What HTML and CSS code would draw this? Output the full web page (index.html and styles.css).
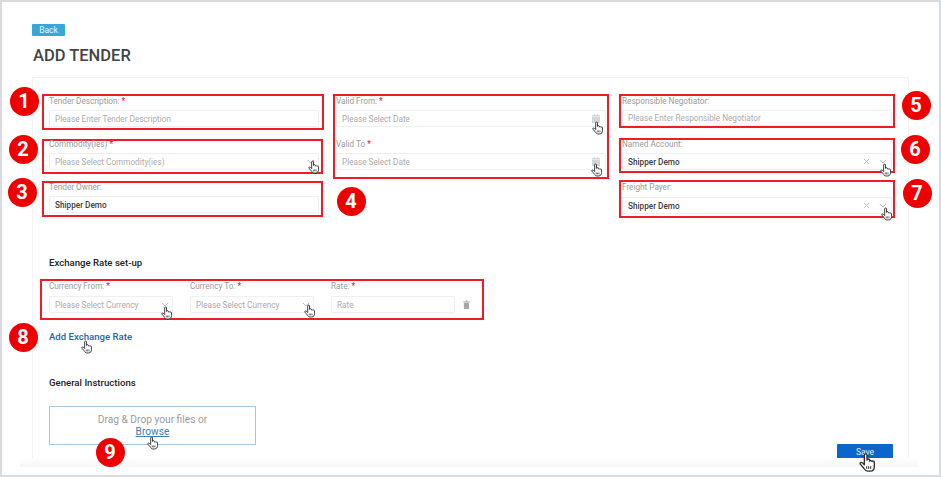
FILE: index.html
```html
<!DOCTYPE html>
<html lang="en">
<head>
    <meta charset="UTF-8">
    <title>Add Tender</title>
    <link rel="stylesheet" href="styles.css">
</head>
<body>
    <svg class="sprites" width="0" height="0">
        <symbol id="hand" viewBox="0 0 24 29">
            <path d="M8 3.500a2 2 0 0 1 4 0V11a2 2 0 0 1 4 .5v1a2 2 0 0 1 3.500.5 2 2 0 0 1 3.500 1V20c0 4-2 7.500-6 7.500h-4c-3 0-4-1.500-5.500-4L2 17c-1-2 1-3.500 3-2l3 3z" fill="#fff" stroke="#2e2e2e" stroke-width="2" stroke-linejoin="round"/>
            <path d="M11.500 20v4M14.500 20v4M17.500 20v4" stroke="#2e2e2e" stroke-width="1.600"/>
        </symbol>
        <symbol id="chevron" viewBox="0 0 10 6">
            <path d="M1 1l4 4 4-4" fill="none" stroke="#a8a8a8" stroke-width="1"/>
        </symbol>
        <symbol id="cross" viewBox="0 0 8 8">
            <path d="M1 1l6 6M7 1l-6 6" fill="none" stroke="#b5b5b5" stroke-width="1"/>
        </symbol>
        <symbol id="calendar" viewBox="0 0 8 9">
            <path d="M0 3h8v6H0zM0 1h8v1.500H0zM2 0h1v1H2zM5 0h1v1H5z" fill="#d6d6d6"/>
        </symbol>
        <symbol id="trash" viewBox="0 0 8 10">
            <path d="M0 1.500h8v1H0zM3 .5h2v1H3zM1 3h6v7H1z" fill="#a8a8a8"/>
        </symbol>
    </svg>

    <div class="frame">
        <a class="back" href="#">Back</a>
        <h1>ADD TENDER</h1>

        <div class="card">
            <div class="top-grid">
                <div class="col">
                    <div class="mark mark-desc">
                        <div class="lbl">Tender Description: <b>*</b></div>
                        <div class="control">Please Enter Tender Description</div>
                    </div>
                    <div class="mark mark-commodity">
                        <div class="lbl">Commodity(ies) <b>*</b></div>
                        <div class="control">Please Select Commodity(ies)<svg class="ico-chevron"><use href="#chevron"/></svg></div>
                    </div>
                    <div class="mark mark-owner">
                        <div class="lbl">Tender Owner:</div>
                        <div class="control filled">Shipper Demo</div>
                    </div>
                </div>

                <div class="col">
                    <div class="mark mark-dates">
                        <div class="lbl">Valid From: <b>*</b></div>
                        <div class="control">Please Select Date<svg class="ico-calendar"><use href="#calendar"/></svg></div>
                        <div class="lbl lbl-second">Valid To <b>*</b></div>
                        <div class="control">Please Select Date<svg class="ico-calendar"><use href="#calendar"/></svg></div>
                    </div>
                </div>

                <div class="col">
                    <div class="mark mark-negotiator">
                        <div class="lbl">Responsible Negotiator:</div>
                        <div class="control">Please Enter Responsible Negotiator</div>
                    </div>
                    <div class="mark mark-named">
                        <div class="lbl">Named Account:</div>
                        <div class="control filled">Shipper Demo<svg class="ico-cross"><use href="#cross"/></svg><svg class="ico-chevron"><use href="#chevron"/></svg></div>
                    </div>
                    <div class="mark mark-payer">
                        <div class="lbl">Freight Payer:</div>
                        <div class="control filled">Shipper Demo<svg class="ico-cross"><use href="#cross"/></svg><svg class="ico-chevron"><use href="#chevron"/></svg></div>
                    </div>
                </div>
            </div>

            <h2 class="rate-title">Exchange Rate set-up</h2>
            <div class="mark mark-rate">
                <div class="rate-field">
                    <div class="lbl">Currency From: <b>*</b></div>
                    <div class="control">Please Select Currency<svg class="ico-chevron"><use href="#chevron"/></svg></div>
                </div>
                <div class="rate-field">
                    <div class="lbl">Currency To: <b>*</b></div>
                    <div class="control">Please Select Currency<svg class="ico-chevron"><use href="#chevron"/></svg></div>
                </div>
                <div class="rate-field">
                    <div class="lbl">Rate: <b>*</b></div>
                    <div class="control">Rate</div>
                </div>
                <svg class="ico-trash"><use href="#trash"/></svg>
            </div>
            <a class="add-rate" href="#">Add Exchange Rate</a>

            <h2 class="instr-title">General Instructions</h2>
            <div class="bottom-row">
                <div class="dropzone">
                    <div>Drag &amp; Drop your files or</div>
                    <a href="#">Browse</a>
                </div>
                <button class="save">Save</button>
            </div>
        </div>

        <div class="fade"></div>

        <span class="badge b1">1</span>
        <span class="badge b2">2</span>
        <span class="badge b3">3</span>
        <span class="badge b4">4</span>
        <span class="badge b5">5</span>
        <span class="badge b6">6</span>
        <span class="badge b7">7</span>
        <span class="badge b8">8</span>
        <span class="badge b9">9</span>

        <svg class="hand h1"><use href="#hand"/></svg>
        <svg class="hand h2"><use href="#hand"/></svg>
        <svg class="hand h3"><use href="#hand"/></svg>
        <svg class="hand h4"><use href="#hand"/></svg>
        <svg class="hand h5"><use href="#hand"/></svg>
        <svg class="hand h6"><use href="#hand"/></svg>
        <svg class="hand h7"><use href="#hand"/></svg>
        <svg class="hand h8"><use href="#hand"/></svg>
        <svg class="hand h9"><use href="#hand"/></svg>
        <svg class="hand h10"><use href="#hand"/></svg>
    </div>
</body>
</html>
```

FILE: styles.css
```css
* {
    box-sizing: border-box;
    margin: 0;
    padding: 0;
    font-family: Roboto, Arial, sans-serif;
}

body {
    background: #fff;
    width: 941px;
    height: 477px;
    overflow: hidden;
}

.sprites {
    position: absolute;
}

.frame {
    position: relative;
    width: 941px;
    height: 477px;
    border: 2px solid #d8dbe0;
    padding: 22px 0 0 30px;
}

.back {
    display: block;
    width: 33px;
    height: 12px;
    background: #3aa6d8;
    border-radius: 1px;
    color: #e4f3fa;
    font-size: 8.500px;
    line-height: 12px;
    text-align: center;
    text-decoration: none;
}

h1 {
    margin: 11px 0 0 1px;
    height: 18px;
    font-size: 16.500px;
    line-height: 18px;
    font-weight: 500;
    color: #444;
}

.card {
    width: 877px;
    height: 390px;
    margin-top: 12px;
    border: 1px solid #f2f3f5;
    border-bottom: none;
    padding: 16px 0 0 9px;
}

.top-grid {
    display: grid;
    grid-template-columns: 282px 276px 277px;
    column-gap: 9px;
}

.top-grid .col:last-child {
    margin-left: 1px;
}

.mark {
    border: 2px solid #ee1c25;
    padding: 0 1px;
}

.lbl {
    height: 14px;
    font-size: 8.200px;
    line-height: 10px;
    color: #9a9a9a;
}

.lbl b {
    color: #e8222a;
    font-weight: 500;
}

.lbl-second {
    margin-top: 12px;
}

.control {
    display: flex;
    align-items: center;
    height: 17px;
    background: #fff;
    border: 1px solid #eeeff1;
    border-radius: 1px;
    padding: 0 0 0 5px;
    font-size: 8.200px;
    color: #ababab;
    white-space: nowrap;
}

.filled {
    color: #3c3c3c;
    font-weight: 500;
}

.mark-desc, .mark-commodity, .mark-owner {
    padding-left: 5px;
    padding-right: 3px;
}

.mark-desc {
    height: 36px;
}

.mark-commodity {
    height: 35px;
    margin-top: 9px;
    margin-right: 1px;
    padding-right: 2px;
}

.mark-commodity .lbl {
    height: 12px;
    line-height: 6px;
}

.mark-owner {
    height: 36px;
    margin-top: 7px;
    margin-right: 1px;
    padding-right: 2px;
}

.mark-owner .lbl {
    height: 13px;
    line-height: 9px;
}

.mark-dates {
    height: 85px;
}

.mark-negotiator {
    height: 34px;
}

.mark-negotiator .control {
    height: 16px;
}

.mark-named {
    height: 35px;
    margin-top: 10px;
}

.mark-named .lbl {
    height: 13px;
    line-height: 9px;
}

.mark-payer {
    height: 38px;
    margin-top: 7px;
}

.mark-payer .lbl {
    height: 15px;
    line-height: 11px;
}

.ico-chevron {
    width: 8px;
    height: 5px;
    margin-left: auto;
    margin-right: 3px;
    flex-shrink: 0;
}

.ico-cross {
    width: 7px;
    height: 7px;
    margin-left: auto;
    flex-shrink: 0;
}

.ico-cross + .ico-chevron {
    margin-left: 9px;
    margin-right: 4px;
}

.ico-calendar {
    width: 8px;
    height: 9px;
    margin-left: auto;
    margin-right: 5px;
    flex-shrink: 0;
}

.ico-trash {
    width: 7px;
    height: 9px;
    margin: 19px 0 0 8px;
    flex-shrink: 0;
}

h2 {
    font-size: 9.600px;
    line-height: 12px;
    font-weight: 500;
    color: #222;
    margin-left: 7px;
}

.rate-title {
    margin-top: 39px;
}

.mark-rate {
    display: flex;
    width: 444px;
    height: 41px;
    margin: 10px 0 0 -2px;
    padding: 0 0 0 7px;
}

.rate-field {
    width: 124px;
    margin-right: 17px;
    flex-shrink: 0;
}

.rate-field:nth-child(3) {
    margin-right: 0;
}

.rate-field .lbl {
    height: 15px;
    line-height: 11px;
}

.add-rate {
    display: block;
    margin: 11px 0 0 7px;
    font-size: 9.600px;
    line-height: 12px;
    font-weight: 500;
    color: #1f66a8;
    text-decoration: none;
}

.instr-title {
    margin-top: 34px;
}

.bottom-row {
    display: flex;
    align-items: flex-start;
    margin: 17px 0 0 7px;
}

.dropzone {
    width: 207px;
    height: 39px;
    border: 1px solid #a9c5de;
    padding-top: 7px;
    text-align: center;
    font-size: 10.200px;
    line-height: 12px;
    color: #9a9a9a;
}

.dropzone a {
    color: #3c7db3;
}

.save {
    width: 56px;
    height: 15px;
    margin: 38px 0 0 581px;
    border: none;
    border-radius: 1px;
    background: #0a66cc;
    color: #e6f0fb;
    font-size: 8.500px;
}

.fade {
    position: absolute;
    left: 18px;
    top: 456px;
    width: 898px;
    height: 9px;
    background: linear-gradient(#fff, #f6f6f7);
}

/* numbered callouts */
.badge {
    position: absolute;
    width: 29px;
    height: 29px;
    margin: -14.500px 0 0 -14.500px;
    border-radius: 50%;
    background: #ee0000;
    color: #fff;
    font-size: 20px;
    font-weight: 700;
    line-height: 29px;
    text-align: center;
}

.b1 { left: 22px; top: 99px; }
.b2 { left: 21px; top: 147px; }
.b3 { left: 20px; top: 190px; }
.b4 { left: 349px; top: 199px; }
.b5 { left: 914px; top: 103px; }
.b6 { left: 913px; top: 147px; }
.b7 { left: 915px; top: 191px; }
.b8 { left: 21px; top: 335px; }
.b9 { left: 108px; top: 450px; }

/* mouse pointers */
.hand {
    position: absolute;
    width: 11px;
    height: 14px;
    margin: -7px 0 0 -5.500px;
}

.h1 { left: 311px; top: 165px; }
.h2 { left: 595px; top: 126px; }
.h3 { left: 594px; top: 168px; }
.h4 { left: 883px; top: 168px; }
.h5 { left: 884px; top: 212px; }
.h6 { left: 164px; top: 311px; }
.h7 { left: 307px; top: 309px; }
.h8 { left: 84px; top: 345px; }
.h9 { left: 150px; top: 441px; }

.h10 {
    left: 865px;
    top: 460px;
    width: 16px;
    height: 21px;
    margin: -10px 0 0 -8px;
}
```
